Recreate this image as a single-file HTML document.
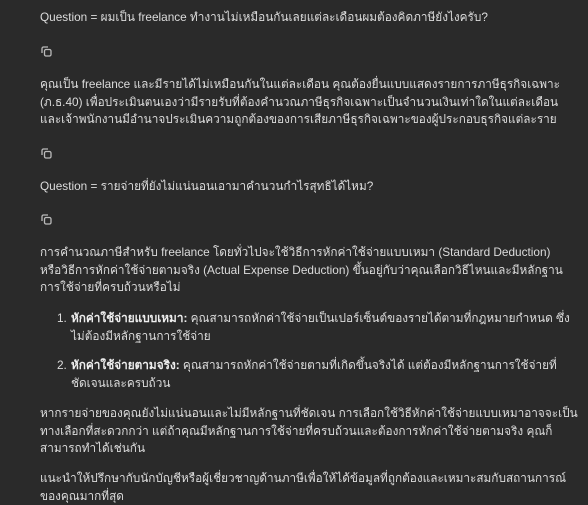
<!DOCTYPE html>
<html><head><meta charset="utf-8"><style>
body{margin:0;background:#2a2a2a;color:#dcdcdc;font-family:"Liberation Sans","Noto Sans CJK SC",sans-serif;font-size:11.8px;line-height:17.6px;width:588px;height:500px;overflow:hidden}
.w{position:absolute;left:40px;white-space:nowrap}
.ic{position:absolute;left:41px;width:11px;height:11px}
b{color:#eee}
.li{position:absolute;left:57px;white-space:nowrap}
.li span.n{position:absolute;left:0}
.li div{padding-left:14px}
</style></head><body>
<div class="w" style="top:9px">Question = ผมเป็น freelance ทำงานไม่เหมือนกันเลยแต่ละเดือนผมต้องคิดภาษียังไงครับ?</div>
<svg class="ic" style="top:46px" viewBox="0 0 11 11" fill="none" stroke="#bbb" stroke-width="1.3"><rect x="3.5" y="3.5" width="6.5" height="6.5" rx="1.5"/><path d="M1 7V2.5A1.5 1.5 0 0 1 2.5 1H7"/></svg>
<div class="w" style="top:76px">คุณเป็น freelance และมีรายได้ไม่เหมือนกันในแต่ละเดือน คุณต้องยื่นแบบแสดงรายการภาษีธุรกิจเฉพาะ<br>(ภ.ธ.40) เพื่อประเมินตนเองว่ามีรายรับที่ต้องคำนวณภาษีธุรกิจเฉพาะเป็นจำนวนเงินเท่าใดในแต่ละเดือน<br>และเจ้าพนักงานมีอำนาจประเมินความถูกต้องของการเสียภาษีธุรกิจเฉพาะของผู้ประกอบธุรกิจแต่ละราย</div>
<svg class="ic" style="top:148px" viewBox="0 0 11 11" fill="none" stroke="#bbb" stroke-width="1.3"><rect x="3.5" y="3.5" width="6.5" height="6.5" rx="1.5"/><path d="M1 7V2.5A1.5 1.5 0 0 1 2.5 1H7"/></svg>
<div class="w" style="top:178px">Question = รายจ่ายที่ยังไม่แน่นอนเอามาคำนวนกำไรสุทธิได้ไหม?</div>
<svg class="ic" style="top:214px" viewBox="0 0 11 11" fill="none" stroke="#bbb" stroke-width="1.3"><rect x="3.5" y="3.5" width="6.5" height="6.5" rx="1.5"/><path d="M1 7V2.5A1.5 1.5 0 0 1 2.5 1H7"/></svg>
<div class="w" style="top:244px">การคำนวณภาษีสำหรับ freelance โดยทั่วไปจะใช้วิธีการหักค่าใช้จ่ายแบบเหมา (Standard Deduction)<br>หรือวิธีการหักค่าใช้จ่ายตามจริง (Actual Expense Deduction) ขึ้นอยู่กับว่าคุณเลือกวิธีไหนและมีหลักฐาน<br>การใช้จ่ายที่ครบถ้วนหรือไม่</div>
<div class="li" style="top:310px"><span class="n">1.</span><div><b>หักค่าใช้จ่ายแบบเหมา:</b> คุณสามารถหักค่าใช้จ่ายเป็นเปอร์เซ็นต์ของรายได้ตามที่กฎหมายกำหนด ซึ่ง<br>ไม่ต้องมีหลักฐานการใช้จ่าย</div></div>
<div class="li" style="top:357px"><span class="n">2.</span><div><b>หักค่าใช้จ่ายตามจริง:</b> คุณสามารถหักค่าใช้จ่ายตามที่เกิดขึ้นจริงได้ แต่ต้องมีหลักฐานการใช้จ่ายที่<br>ชัดเจนและครบถ้วน</div></div>
<div class="w" style="top:405px">หากรายจ่ายของคุณยังไม่แน่นอนและไม่มีหลักฐานที่ชัดเจน การเลือกใช้วิธีหักค่าใช้จ่ายแบบเหมาอาจจะเป็น<br>ทางเลือกที่สะดวกกว่า แต่ถ้าคุณมีหลักฐานการใช้จ่ายที่ครบถ้วนและต้องการหักค่าใช้จ่ายตามจริง คุณก็<br>สามารถทำได้เช่นกัน</div>
<div class="w" style="top:470px">แนะนำให้ปรึกษากับนักบัญชีหรือผู้เชี่ยวชาญด้านภาษีเพื่อให้ได้ข้อมูลที่ถูกต้องและเหมาะสมกับสถานการณ์<br>ของคุณมากที่สุด</div>
</body></html>
